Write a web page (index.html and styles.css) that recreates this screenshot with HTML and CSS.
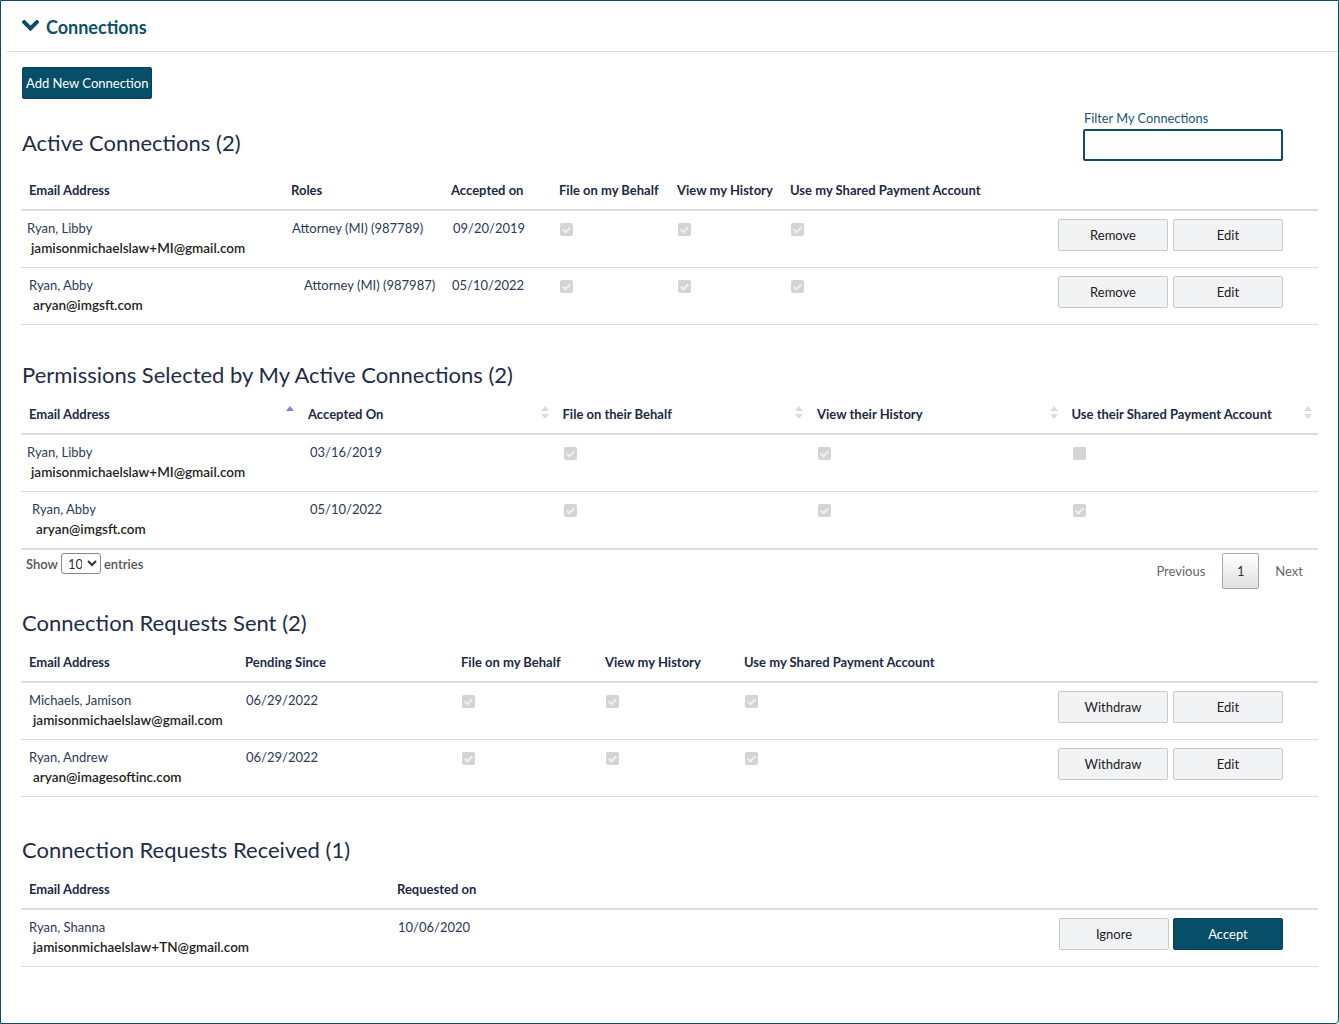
FILE: index.html
```html
<!DOCTYPE html>
<html lang="en">
<head>
<meta charset="utf-8">
<title>Connections</title>
<link rel="stylesheet" href="styles.css">
</head>
<body>
<div class="panel">
  <div class="panel-head">
    <svg class="chev" width="17" height="12" viewBox="0 0 17 12"><polyline points="2.2,2.2 8.5,8.5 14.8,2.2" fill="none" stroke="#0b4f6c" stroke-width="4" stroke-linecap="square"/></svg>
    <span class="panel-title">Connections</span>
  </div>
  <div class="panel-body">
    <button class="btn-primary add-btn">Add New Connection</button>

    <div class="sec-head">
      <h2 class="sec-title">Active Connections (2)</h2>
      <div class="filter">
        <label class="filter-label" for="flt">Filter My Connections</label>
        <input id="flt" class="filter-input" type="text">
      </div>
    </div>
    <table class="grid t1">
      <colgroup><col class="c-a1"><col class="c-a2"><col class="c-a3"><col class="c-a4"><col class="c-a5"><col class="c-a6"><col class="c-act"></colgroup>
      <thead><tr><th>Email Address</th><th>Roles</th><th>Accepted on</th><th>File on my Behalf</th><th>View my History</th><th>Use my Shared Payment Account</th><th></th></tr></thead>
      <tbody>
        <tr>
          <td class="who shift-l"><div class="name">Ryan, Libby</div><div class="email">jamisonmichaelslaw+MI@gmail.com</div></td>
          <td class="txt">Attorney (MI) (987789)</td>
          <td class="txt shift-r">09/20/2019</td>
          <td><span class="cb on"></span></td>
          <td><span class="cb on"></span></td>
          <td><span class="cb on"></span></td>
          <td class="act"><button class="btn">Remove</button><button class="btn">Edit</button></td>
        </tr>
        <tr>
          <td class="who"><div class="name">Ryan, Abby</div><div class="email">aryan@imgsft.com</div></td>
          <td class="txt shift-xr">Attorney (MI) (987987)</td>
          <td class="txt">05/10/2022</td>
          <td><span class="cb on"></span></td>
          <td><span class="cb on"></span></td>
          <td><span class="cb on"></span></td>
          <td class="act"><button class="btn">Remove</button><button class="btn">Edit</button></td>
        </tr>
      </tbody>
    </table>

    <h2 class="sec-title sec-gap">Permissions Selected by My Active Connections (2)</h2>
    <table class="grid t2">
      <colgroup><col class="c-b1"><col class="c-b2"><col class="c-b2"><col class="c-b2"><col class="c-b2"></colgroup>
      <thead><tr>
        <th class="sort"><div class="sh"><span>Email Address</span><svg class="si" width="8" height="14" viewBox="0 0 8 14"><polygon points="4,0 8,5 0,5" fill="#7d83d6"/></svg></div></th>
        <th class="sort"><div class="sh"><span>Accepted On</span><svg class="si" width="8" height="14" viewBox="0 0 8 14"><polygon points="4,0 8,5 0,5" fill="#dcdcdc"/><polygon points="0,8 8,8 4,13" fill="#dcdcdc"/></svg></div></th>
        <th class="sort"><div class="sh"><span>File on their Behalf</span><svg class="si" width="8" height="14" viewBox="0 0 8 14"><polygon points="4,0 8,5 0,5" fill="#dcdcdc"/><polygon points="0,8 8,8 4,13" fill="#dcdcdc"/></svg></div></th>
        <th class="sort"><div class="sh"><span>View their History</span><svg class="si" width="8" height="14" viewBox="0 0 8 14"><polygon points="4,0 8,5 0,5" fill="#dcdcdc"/><polygon points="0,8 8,8 4,13" fill="#dcdcdc"/></svg></div></th>
        <th class="sort"><div class="sh"><span>Use their Shared Payment Account</span><svg class="si" width="8" height="14" viewBox="0 0 8 14"><polygon points="4,0 8,5 0,5" fill="#dcdcdc"/><polygon points="0,8 8,8 4,13" fill="#dcdcdc"/></svg></div></th>
      </tr></thead>
      <tbody>
        <tr>
          <td class="who shift-l"><div class="name">Ryan, Libby</div><div class="email">jamisonmichaelslaw+MI@gmail.com</div></td>
          <td class="txt t2d">03/16/2019</td>
          <td class="t2c"><span class="cb on"></span></td>
          <td class="t2c"><span class="cb on"></span></td>
          <td class="t2c"><span class="cb"></span></td>
        </tr>
        <tr class="last">
          <td class="who shift-xs"><div class="name">Ryan, Abby</div><div class="email">aryan@imgsft.com</div></td>
          <td class="txt t2d">05/10/2022</td>
          <td class="t2c"><span class="cb on"></span></td>
          <td class="t2c"><span class="cb on"></span></td>
          <td class="t2c"><span class="cb on"></span></td>
        </tr>
      </tbody>
    </table>
    <div class="dt-foot">
      <div class="length">Show <select class="len-sel"><option>10</option></select> entries</div>
      <div class="pager"><span class="pg-link">Previous</span><span class="pg-cur">1</span><span class="pg-link">Next</span></div>
    </div>

    <h2 class="sec-title sec-gap2">Connection Requests Sent (2)</h2>
    <table class="grid t3">
      <colgroup><col class="c-c1"><col class="c-c2"><col class="c-c3"><col class="c-c4"><col class="c-c5"><col class="c-act"></colgroup>
      <thead><tr><th>Email Address</th><th>Pending Since</th><th>File on my Behalf</th><th>View my History</th><th>Use my Shared Payment Account</th><th></th></tr></thead>
      <tbody>
        <tr>
          <td class="who"><div class="name">Michaels, Jamison</div><div class="email">jamisonmichaelslaw@gmail.com</div></td>
          <td class="txt">06/29/2022</td>
          <td><span class="cb on"></span></td>
          <td><span class="cb on"></span></td>
          <td><span class="cb on"></span></td>
          <td class="act"><button class="btn">Withdraw</button><button class="btn">Edit</button></td>
        </tr>
        <tr>
          <td class="who"><div class="name">Ryan, Andrew</div><div class="email">aryan@imagesoftinc.com</div></td>
          <td class="txt">06/29/2022</td>
          <td><span class="cb on"></span></td>
          <td><span class="cb on"></span></td>
          <td><span class="cb on"></span></td>
          <td class="act"><button class="btn">Withdraw</button><button class="btn">Edit</button></td>
        </tr>
      </tbody>
    </table>

    <h2 class="sec-title sec-gap4">Connection Requests Received (1)</h2>
    <table class="grid t4">
      <colgroup><col class="c-d1"><col class="c-d2"><col class="c-act"></colgroup>
      <thead><tr><th>Email Address</th><th>Requested on</th><th></th></tr></thead>
      <tbody>
        <tr>
          <td class="who"><div class="name">Ryan, Shanna</div><div class="email">jamisonmichaelslaw+TN@gmail.com</div></td>
          <td class="txt">10/06/2020</td>
          <td class="act act4"><button class="btn">Ignore</button><button class="btn-primary btn-acc">Accept</button></td>
        </tr>
      </tbody>
    </table>
  </div>
</div>
</body>
</html>
```
FILE: styles.css
```css
* { box-sizing: border-box; }
html, body { margin: 0; padding: 0; background: #fff; }
body {
  font-family: Lato, "Open Sans", "Liberation Sans", sans-serif;
  font-size: 13px;
  line-height: 20px;
  color: #2c3a57;
}
.panel {
  width: 1339px;
  height: 1024px;
  border: 1px solid #0d4d68;
  border-radius: 0 0 4px 0;
  overflow: hidden;
}
.panel-head {
  margin-left: 6px;
  padding: 14px 0 12px 15px;
  border-bottom: 1px solid #dedede;
  display: flex;
  align-items: center;
  height: 51px;
}
.chev { display: block; margin-right: 7px; margin-top: -3px; }
.panel-title {
  font-size: 18px;
  font-weight: 700;
  color: #0b4f6c;
  line-height: 24px;
}
.panel-body { padding: 15px 20px 0 20px; }

.btn-primary {
  font-family: inherit;
  background: #074e69;
  color: #fff;
  border: 1px solid #0a3f55;
  border-radius: 2px;
  font-size: 13px;
  line-height: 20px;
  cursor: pointer;
}
.add-btn { height: 32px; padding: 0 3px; margin-left: 1px; display: block; }

.sec-head {
  display: flex;
  justify-content: space-between;
  align-items: flex-end;
  margin-top: 11px;
  margin-bottom: 9px;
}
.sec-title {
  margin: 0;
  font-size: 22px;
  line-height: 26px;
  font-weight: 400;
  color: #1f2c46;
  padding-left: 1px;
}
.sec-head .sec-title { margin-bottom: 5px; }
.sec-gap { margin-top: 37px; margin-bottom: 6px; }
.sec-gap2 { margin-top: 21px; margin-bottom: 6px; }
.sec-gap4 { margin-top: 40px; margin-bottom: 6px; }

.filter { display: flex; flex-direction: column; margin-right: 35px; }
.filter-label { font-size: 12.8px; line-height: 16px; color: #1b5674; margin: 0 0 3px 1px; }
.filter-input {
  width: 200px;
  height: 32px;
  border: 2px solid #0d4d68;
  border-radius: 2px;
  font-family: inherit;
  font-size: 13px;
  padding: 0 6px;
}

.grid {
  width: 100%;
  border-collapse: collapse;
  table-layout: fixed;
}
.grid th {
  text-align: left;
  font-weight: 700;
  color: #1c2946;
  padding: 10px 8px 9px 8px;
  border-bottom: 2px solid #dddddd;
  white-space: nowrap;
}
.grid td {
  vertical-align: top;
  padding: 7px 8px 9px 8px;
  border-bottom: 1px solid #dddddd;
  white-space: nowrap;
}
.grid tr.last td { border-bottom: 2px solid #dddddd; }

.c-a1 { width: 262px; } .c-a2 { width: 160px; } .c-a3 { width: 108px; }
.c-a4 { width: 118px; } .c-a5 { width: 113px; } .c-a6 { width: 268px; }
.c-act { width: 268px; }
.c-b1 { width: 279px; } .c-b2 { width: 254.5px; }
.c-c1 { width: 216px; } .c-c2 { width: 216px; } .c-c3 { width: 144px; }
.c-c4 { width: 139px; } .c-c5 { width: 314px; }
.c-d1 { width: 368px; } .c-d2 { width: 661px; }

.who { padding-left: 9px; }
.who.shift-l { padding-left: 6px; }
.who.shift-xs { padding-left: 11px; }
.name { color: #2c3a57; }
.email { color: #1e1e1e; font-weight: 600; font-size: 13.5px; margin-left: 4px; }
td.txt { padding-left: 9px; }
.txt.shift-r { padding-left: 10px; }
.txt.shift-xr { padding-left: 21px; }
.t2d { padding-left: 10px !important; }
.t2c { padding-left: 10px; }

.cb {
  display: block;
  width: 13px;
  height: 13px;
  margin: 5px 0 0 1px;
  background: #d4d4d4;
  border-radius: 2px;
  position: relative;
}
.cb.on::after {
  content: "";
  position: absolute;
  left: 4px;
  top: 2px;
  width: 3px;
  height: 6px;
  border: solid #f0f0f0;
  border-width: 0 2px 2px 0;
  transform: rotate(45deg);
}

.act { text-align: right; padding-right: 35px !important; }
.btn {
  font-family: inherit;
  font-size: 13px;
  color: #222;
  background: #f2f3f5;
  border: 1px solid #c9c9c9;
  border-radius: 2px;
  width: 110px;
  height: 32px;
  margin-left: 5px;
  margin-top: 1px;
  cursor: pointer;
}
.btn:first-child { margin-left: 0; }
.btn-acc { width: 110px; height: 32px; margin-left: 4px; margin-top: 1px; }

.sort { padding-right: 6px !important; }
.sh { display: flex; align-items: center; justify-content: space-between; }
.si { display: block; margin-top: -2px; }

.dt-foot {
  display: flex;
  justify-content: space-between;
  align-items: flex-start;
  margin-top: 3px;
}
.length {
  margin-top: 0;
  padding-left: 5px;
  color: #555;
  font-weight: 600;
  display: flex;
  align-items: center;
  gap: 3px;
}
.len-sel {
  font-family: inherit;
  font-size: 13px;
  height: 21px;
  width: 40px;
  border: 1px solid #888;
  border-radius: 3px;
  background: #fff;
  color: #333;
  padding: 0 2px;
}
.pager { display: flex; align-items: center; padding-right: 15px; }
.pg-link { color: #666; }
.pg-cur {
  width: 37px;
  height: 36px;
  display: flex;
  align-items: center;
  justify-content: center;
  border: 1px solid #a8a8a8;
  border-radius: 2px;
  background: linear-gradient(#ffffff, #e0e0e0);
  color: #333;
  margin: 0 16px 0 17px;
}
```
